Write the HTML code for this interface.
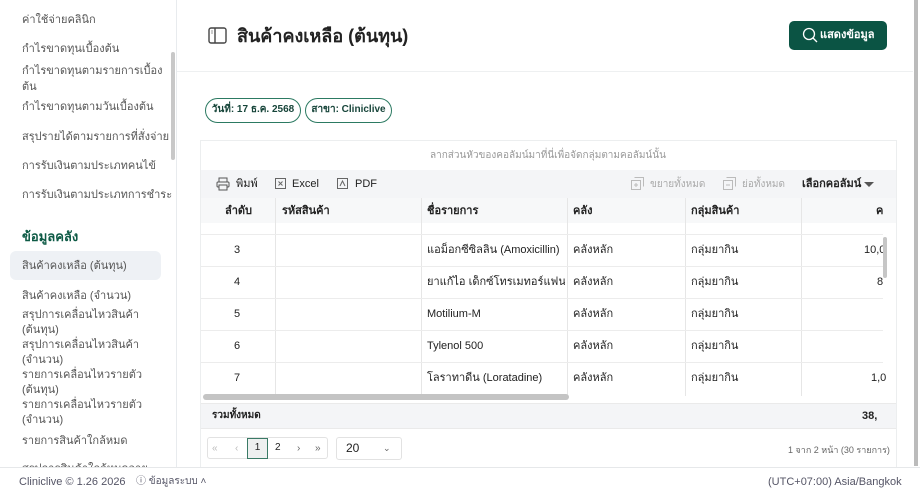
<!DOCTYPE html>
<html><head><meta charset="utf-8"><style>
*{box-sizing:border-box;margin:0;padding:0}
body{width:920px;height:490px;overflow:hidden;background:#fff;font-family:"Liberation Sans","Noto Sans CJK SC",sans-serif;position:relative;color:#222}
.a{position:absolute;white-space:nowrap;line-height:14px}
.side{position:absolute;left:0;top:0;width:177px;height:467px;border-right:1px solid #e8ebee;background:#fff}
.si{position:absolute;left:22px;font-size:11px;color:#555;line-height:16px}
.th{font-size:11px;font-weight:bold;color:#222}
.td{font-size:11px;color:#222;line-height:14px;height:14px}
.vl{position:absolute;width:1px;background:#e6e6e6}
.hl{position:absolute;height:1px;background:#ececec}
</style></head><body>
<div class="side">
<div class="si" style="top:12px">ค่าใช้จ่ายคลินิก</div>
<div class="si" style="top:41px">กำไรขาดทุนเบื้องต้น</div>
<div class="si" style="top:63px">กำไรขาดทุนตามรายการเบื้อง<br>ต้น</div>
<div class="si" style="top:99px">กำไรขาดทุนตามวันเบื้องต้น</div>
<div class="si" style="top:129px">สรุปรายได้ตามรายการที่สั่งจ่าย</div>
<div class="si" style="top:158px">การรับเงินตามประเภทคนไข้</div>
<div class="si" style="top:187px">การรับเงินตามประเภทการชำระ</div>
<div class="si" style="top:229px;font-size:13px;font-weight:bold;color:#0d5a45">ข้อมูลคลัง</div>
<div style="position:absolute;left:10px;top:251px;width:151px;height:29px;background:#eef1f5;border-radius:6px"></div>
<div class="si" style="top:258px">สินค้าคงเหลือ (ต้นทุน)</div>
<div class="si" style="top:288px">สินค้าคงเหลือ (จำนวน)</div>
<div class="si" style="top:308px;line-height:15px">สรุปการเคลื่อนไหวสินค้า<br>(ต้นทุน)<br>สรุปการเคลื่อนไหวสินค้า<br>(จำนวน)<br>รายการเคลื่อนไหวรายตัว<br>(ต้นทุน)<br>รายการเคลื่อนไหวรายตัว<br>(จำนวน)</div>
<div class="si" style="top:433px">รายการสินค้าใกล้หมด</div>
<div class="si" style="top:461px">สรุปการสินค้าใกล้หมดอายุ</div>
<div style="position:absolute;left:171px;top:52px;width:4px;height:108px;background:#c8c8c8;border-radius:2px"></div>
</div>
<!-- header -->
<svg class="a" style="left:208px;top:27px" width="19" height="17" viewBox="0 0 19 17"><rect x="1" y="1" width="17" height="15" rx="2" fill="none" stroke="#444" stroke-width="1.4"/><line x1="7" y1="1" x2="7" y2="16" stroke="#444" stroke-width="1.4"/><line x1="3" y1="4" x2="5" y2="4" stroke="#999"/><line x1="3" y1="6" x2="5" y2="6" stroke="#999"/></svg>
<div class="a" style="left:237px;top:25px;font-size:18px;line-height:22px;font-weight:bold;color:#222">สินค้าคงเหลือ (ต้นทุน)</div>
<div class="a" style="left:789px;top:21px;width:98px;height:29px;background:#0b5444;border-radius:5px;color:#fff;font-size:11px;font-weight:bold;line-height:29px;padding-left:31px">แสดงข้อมูล</div>
<svg class="a" style="left:802px;top:27px" width="16" height="16" viewBox="0 0 16 16"><circle cx="7" cy="7" r="5.5" fill="none" stroke="#fff" stroke-width="1.3"/><line x1="11" y1="11" x2="15" y2="15" stroke="#fff" stroke-width="1.3"/></svg>
<div class="hl" style="left:177px;top:71px;width:736px;background:#eef0f1"></div>
<div class="a" style="left:914px;top:0;width:4px;height:466px;background:#bbb"></div>
<!-- chips -->
<div class="a" style="left:205px;top:98px;height:25px;width:96px;border:1.4px solid #2c7a62;border-radius:13px;font-size:10px;font-weight:bold;line-height:22px;text-align:center;color:#17453a">วันที่: 17 ธ.ค. 2568</div>
<div class="a" style="left:305px;top:98px;height:25px;width:87px;border:1.4px solid #2c7a62;border-radius:13px;font-size:10px;font-weight:bold;line-height:22px;text-align:center;color:#17453a">สาขา: Cliniclive</div>
<!-- table card -->
<div class="a" style="left:200px;top:140px;width:697px;height:327px;border:1px solid #eceeef;border-bottom:none"></div>
<div class="a" style="left:430px;top:149px;font-size:10px;color:#999">ลากส่วนหัวของคอลัมน์มาที่นี่เพื่อจัดกลุ่มตามคอลัมน์นั้น</div>
<div class="a" style="left:201px;top:170px;width:695px;height:28px;background:#f4f5f7"></div>
<svg class="a" style="left:216px;top:177px" width="14" height="14" viewBox="0 0 14 14"><rect x="3" y="1" width="8" height="4" fill="none" stroke="#555"/><rect x="1" y="5" width="12" height="5" rx="1" fill="none" stroke="#555"/><rect x="3" y="8" width="8" height="5" fill="#f4f5f7" stroke="#555"/></svg>
<div class="a td" style="left:236px;top:177px">พิมพ์</div>
<svg class="a" style="left:275px;top:178px" width="11" height="11"><rect x=".5" y=".5" width="10" height="10" fill="none" stroke="#666"/><path d="M3.5 3.5l4 4M7.5 3.5l-4 4" stroke="#666"/></svg>
<div class="a td" style="left:292px;top:177px">Excel</div>
<svg class="a" style="left:337px;top:178px" width="11" height="11"><rect x=".5" y=".5" width="10" height="10" fill="none" stroke="#666"/><path d="M3 8l2.5-5 2.5 5" fill="none" stroke="#666"/></svg>
<div class="a td" style="left:355px;top:177px">PDF</div>
<svg class="a" style="left:631px;top:177px" width="13" height="13"><rect x=".5" y="3.5" width="9" height="9" fill="none" stroke="#bbb"/><path d="M3.5 .5h9v9" fill="none" stroke="#bbb"/><path d="M5 6v4M3 8h4" stroke="#bbb"/></svg>
<div class="a" style="left:650px;top:178px;font-size:10px;color:#aaa">ขยายทั้งหมด</div>
<svg class="a" style="left:723px;top:177px" width="13" height="13"><rect x=".5" y="3.5" width="9" height="9" fill="none" stroke="#bbb"/><path d="M3.5 .5h9v9" fill="none" stroke="#bbb"/><path d="M3 8h4" stroke="#bbb"/></svg>
<div class="a" style="left:742px;top:178px;font-size:10px;color:#aaa">ย่อทั้งหมด</div>
<div class="a" style="left:802px;top:177px;font-size:11px;font-weight:bold">เลือกคอลัมน์</div>
<div class="a" style="left:864px;top:182px;border-left:5px solid transparent;border-right:5px solid transparent;border-top:5px solid #555"></div>
<!-- header row -->
<div class="a" style="left:201px;top:198px;width:695px;height:25px;background:#f7f8f9"></div>
<div class="a th" style="left:225px;top:204px">ลำดับ</div>
<div class="a th" style="left:282px;top:204px">รหัสสินค้า</div>
<div class="a th" style="left:427px;top:204px">ชื่อรายการ</div>
<div class="a th" style="left:573px;top:204px">คลัง</div>
<div class="a th" style="left:691px;top:204px">กลุ่มสินค้า</div>
<div class="a th" style="left:876px;top:204px">ค</div>
<div class="vl" style="left:275px;top:198px;height:198px"></div>
<div class="vl" style="left:421px;top:198px;height:198px"></div>
<div class="vl" style="left:567px;top:198px;height:198px"></div>
<div class="vl" style="left:685px;top:198px;height:198px"></div>
<div class="vl" style="left:801px;top:198px;height:198px"></div>
<div class="hl" style="left:201px;top:234px;width:682px"></div>
<div class="hl" style="left:201px;top:266px;width:682px"></div>
<div class="hl" style="left:201px;top:298px;width:682px"></div>
<div class="hl" style="left:201px;top:330px;width:682px"></div>
<div class="hl" style="left:201px;top:362px;width:682px"></div>
<div class="a td" style="left:234px;top:243px">3</div><div class="a td" style="left:427px;top:243px">แอม็อกซีซิลลิน (Amoxicillin)</div><div class="a td" style="left:573px;top:243px">คลังหลัก</div><div class="a td" style="left:691px;top:243px">กลุ่มยากิน</div><div class="a td" style="left:864px;top:243px">10,0</div>
<div class="a td" style="left:234px;top:275px">4</div><div class="a td" style="left:427px;top:275px;width:138px;overflow:hidden">ยาแก้ไอ เด็กซ์โทรเมทอร์แฟน...</div><div class="a td" style="left:573px;top:275px">คลังหลัก</div><div class="a td" style="left:691px;top:275px">กลุ่มยากิน</div><div class="a td" style="left:877px;top:275px">8</div>
<div class="a td" style="left:234px;top:307px">5</div><div class="a td" style="left:427px;top:307px">Motilium-M</div><div class="a td" style="left:573px;top:307px">คลังหลัก</div><div class="a td" style="left:691px;top:307px">กลุ่มยากิน</div>
<div class="a td" style="left:234px;top:339px">6</div><div class="a td" style="left:427px;top:339px">Tylenol 500</div><div class="a td" style="left:573px;top:339px">คลังหลัก</div><div class="a td" style="left:691px;top:339px">กลุ่มยากิน</div>
<div class="a td" style="left:234px;top:371px">7</div><div class="a td" style="left:427px;top:371px">โลราทาดีน (Loratadine)</div><div class="a td" style="left:573px;top:371px">คลังหลัก</div><div class="a td" style="left:691px;top:371px">กลุ่มยากิน</div><div class="a td" style="left:871px;top:371px">1,0</div>
<div class="a" style="left:883px;top:237px;width:4px;height:41px;background:#c6c6c6;border-radius:2px"></div>
<div class="a" style="left:203px;top:394px;width:366px;height:6px;background:#c4c4c4;border-radius:3px"></div>
<!-- total -->
<div class="a" style="left:201px;top:403px;width:695px;height:26px;background:#f4f5f7;border-top:1px solid #eaeaea;border-bottom:1px solid #eaeaea"></div>
<div class="a th" style="left:212px;top:409px;font-size:10px">รวมทั้งหมด</div>
<div class="a th" style="left:862px;top:409px">38,</div>
<!-- pagination -->
<div class="a" style="left:207px;top:437px;width:121px;height:22px;border:1px solid #e2e2e2;border-radius:3px"></div>
<div class="a" style="left:212px;top:442px;font-size:10px;color:#bbb">«</div>
<div class="a" style="left:235px;top:442px;font-size:10px;color:#bbb">‹</div>
<div class="a" style="left:247px;top:438px;width:21px;height:21px;border:1.5px solid #3a7a66;background:#eef0f0;font-size:10px;text-align:center;line-height:18px">1</div>
<div class="a" style="left:275px;top:441px;font-size:10px">2</div>
<div class="a" style="left:297px;top:442px;font-size:10px;color:#666">›</div>
<div class="a" style="left:315px;top:442px;font-size:10px;color:#666">»</div>
<div class="a" style="left:336px;top:437px;width:66px;height:23px;border:1px solid #e2e2e2;border-radius:3px;font-size:12px;line-height:21px;padding-left:9px">20</div>
<div class="a" style="left:383px;top:441px;font-size:9px;color:#666">⌄</div>
<div class="a" style="left:788px;top:443px;font-size:9px;color:#666">1 จาก 2 หน้า (30 รายการ)</div>
<!-- footer -->
<div class="a" style="left:0;top:467px;width:920px;height:23px;background:#fff;border-top:1px solid #e6e8ea"></div>
<div class="a" style="left:19px;top:475px;font-size:11px;color:#556">Cliniclive © 1.26 2026</div>
<div class="a" style="left:136px;top:475px;font-size:10px;color:#556">ⓘ ข้อมูลระบบ ˄</div>
<div class="a" style="left:768px;top:475px;font-size:11px;color:#556">(UTC+07:00) Asia/Bangkok</div>
</body></html>
